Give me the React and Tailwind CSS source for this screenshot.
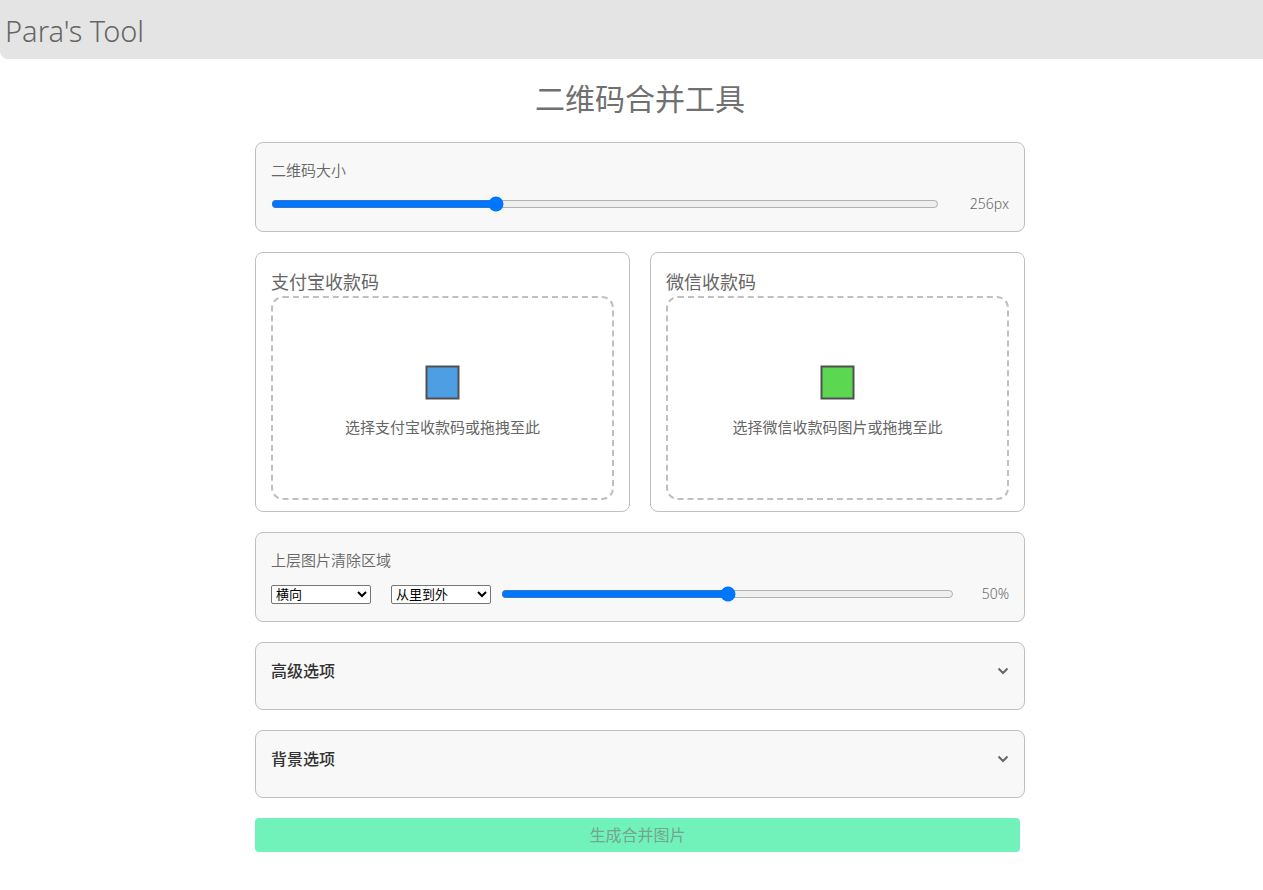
const cardClass = 'mb-5 rounded-lg border border-[#c0c0c0] bg-[#f8f8f8] px-[15px]';
const selectClass =
    "h-[19px] w-[100px] rounded-[2px] border border-[#767676] bg-white font-['Liberation_Sans','Noto_Sans_CJK_SC',sans-serif] text-[13px] leading-4 text-black";

function Chevron() {
    return (
        <svg width="12" height="12" viewBox="0 0 12 12" fill="none" aria-hidden="true">
            <path d="M1.5 3.5 6 8l4.5-4.5" stroke="#666" strokeWidth="2" />
        </svg>
    );
}

function UploadCard({ id, title, hint, color }) {
    return (
        <section className="flex-1 rounded-lg border border-[#c0c0c0] px-[15px] pt-4 pb-[11px]">
            <h2 className="pb-px text-[18px] leading-[26px]">{title}</h2>
            <label
                htmlFor={id}
                className="flex h-[204px] cursor-pointer flex-col items-center justify-center rounded-xl border-2 border-dashed border-[#c0c0c0] pt-1.5"
            >
                <svg width="35" height="36" viewBox="0 0 35 36" aria-hidden="true">
                    <rect x="1.5" y="2.5" width="32" height="32" fill={color} stroke="#505050" strokeWidth="2" />
                </svg>
                <span className="mt-[15px] text-[15px] leading-6">{hint}</span>
                <input id={id} type="file" accept="image/*" className="sr-only" />
            </label>
        </section>
    );
}

function OptionsCard({ title }) {
    return (
        <section className={`${cardClass} pt-4 pb-[26px]`}>
            <button type="button" className="flex w-full items-center justify-between text-base font-medium text-[#333]">
                {title}
                <Chevron />
            </button>
        </section>
    );
}

export default function App() {
    return (
        <div className="font-['Noto_Sans','Noto_Sans_CJK_SC',sans-serif] text-[#666]">
            <header className="rounded-bl-lg bg-[#e4e4e4] px-[5px] pt-0.5 text-[29px] leading-[57px] font-[350]">
                Para&apos;s Tool
            </header>

            <div className="pl-[17px]">
                <main className="mx-auto max-w-[770px] text-[15px]">
                    <h1 className="pt-[17px] pb-[21px] text-center text-[30px] leading-[45px] text-[#707070]">二维码合并工具</h1>

                    <section className={`${cardClass} pt-[15px] pb-[15px]`}>
                        <label htmlFor="size" className="block leading-6 font-[350]">二维码大小</label>
                        <div className="mt-[10px] flex items-center">
                            <input id="size" type="range" min="128" max="512" defaultValue="256" className="min-w-0 flex-1" />
                            <output htmlFor="size" className="w-[70px] text-right text-sm leading-6 font-[350]">256px</output>
                        </div>
                    </section>

                    <div className="mb-5 flex gap-5">
                        <UploadCard id="alipay" title="支付宝收款码" hint="选择支付宝收款码或拖拽至此" color="#4d9ee3" />
                        <UploadCard id="wechat" title="微信收款码" hint="选择微信收款码图片或拖拽至此" color="#5bd751" />
                    </div>

                    <section className={`${cardClass} pt-[15px] pb-[15px]`}>
                        <label htmlFor="area" className="block leading-6 font-[350]">上层图片清除区域</label>
                        <div className="mt-[10px] flex items-center">
                            <select aria-label="方向" className={`${selectClass} mr-5`}>
                                <option>横向</option>
                                <option>纵向</option>
                            </select>
                            <select aria-label="顺序" className={`${selectClass} mr-[10px]`}>
                                <option>从里到外</option>
                                <option>从外到里</option>
                            </select>
                            <input id="area" type="range" defaultValue="50" className="min-w-0 flex-1" />
                            <output htmlFor="area" className="w-[55px] text-right text-sm leading-6 font-[350]">50%</output>
                        </div>
                    </section>

                    <OptionsCard title="高级选项" />
                    <OptionsCard title="背景选项" />

                    <div className="pr-[5px]">
                        <button type="button" disabled className="w-full rounded bg-[#72f2bb] py-[5px] text-base text-[#73a58f]">
                            生成合并图片
                        </button>
                    </div>
                </main>
            </div>
        </div>
    );
}
